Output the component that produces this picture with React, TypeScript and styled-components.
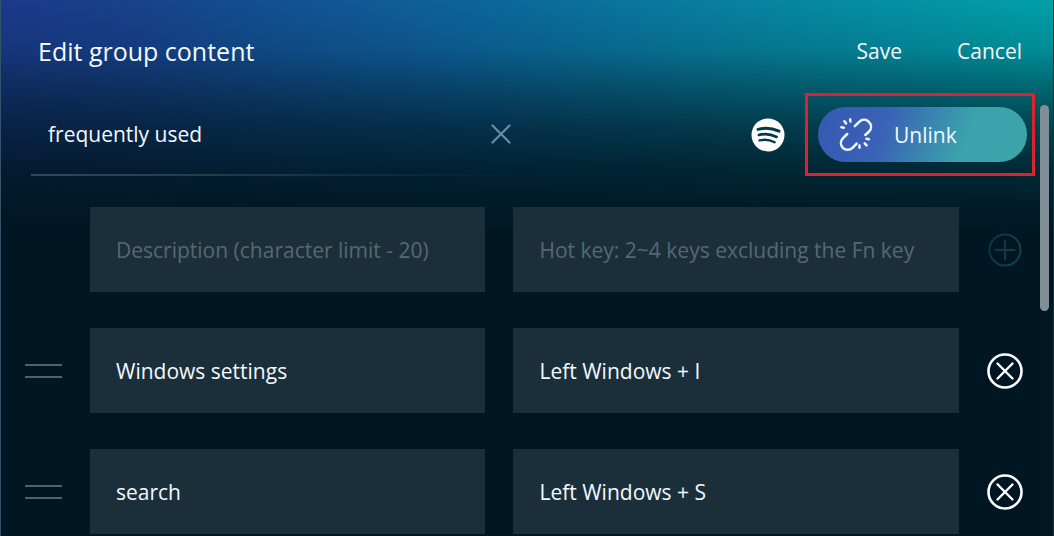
import React from "react";
import styled, { createGlobalStyle, css } from "styled-components";

const GlobalStyle = createGlobalStyle`
  *, *::before, *::after { box-sizing: border-box; }
  body {
    margin: 0;
    background: #001622;
    color: #f2f9ff;
    font-family: "Open Sans", "Noto Sans", sans-serif;
    font-size: 21px;
    line-height: 28px;
  }
`;

const Panel = styled.main`
  min-height: 100vh;
  border-left: 1px solid #34536a;
  border-right: 1px solid #0c3440;
  background:
    linear-gradient(
      to bottom,
      rgba(0, 22, 34, 0) 0,
      rgba(0, 22, 34, 0.14) 50px,
      rgba(0, 22, 34, 0.43) 90px,
      rgba(0, 22, 34, 0.66) 125px,
      rgba(0, 22, 34, 0.86) 170px,
      rgba(0, 22, 34, 0.95) 205px,
      #001622 240px
    ),
    linear-gradient(to right, #1a3a8a 0, #17418c 12%, #0c659c 45%, #08809f 68%, #00a0a8 100%);
`;

const Header = styled.header`
  display: flex;
  align-items: center;
  justify-content: space-between;
  height: 93px;
  padding: 9px 31px 0 37px;
`;

const Title = styled.h1`
  margin: 0;
  font-size: 25px;
  font-weight: 400;
  line-height: 32px;
`;

const Actions = styled.div`
  display: flex;
  gap: 55px;
`;

const plainButton = css`
  margin: 0;
  padding: 0;
  border: 0;
  background: none;
  color: inherit;
  font: inherit;
  cursor: pointer;
`;

const TextButton = styled.button`
  ${plainButton}
`;

const Body = styled.div`
  display: flex;
  padding-right: 4px;
`;

const Content = styled.form`
  flex: 1;
  min-width: 0;
`;

const GroupBar = styled.div`
  display: flex;
  align-items: center;
  padding: 0 5px 0 30px;
`;

const NameField = styled.div`
  display: flex;
  align-items: center;
  flex: 0 1 480px;
  height: 83px;
  padding-left: 17px;
  border-bottom: 2px solid;
  border-image: linear-gradient(to right, #2f4859, #25404f 30%, rgba(37, 64, 79, 0)) 1;
`;

const NameInput = styled.input`
  flex: 1;
  min-width: 0;
  padding: 0;
  border: 0;
  outline: 0;
  background: none;
  color: inherit;
  font: inherit;
`;

const IconButton = styled.button<{ $tone?: string }>`
  ${plainButton}
  display: grid;
  place-items: center;
  color: ${(p) => p.$tone ?? "#ffffff"};

  svg { display: block; }
`;

const LinkTools = styled.div`
  display: flex;
  align-items: center;
  gap: 20px;
  margin-left: auto;
`;

const Highlight = styled.div`
  padding: 11px 5px 11px 10px;
  border: 3px solid #dc222c;
`;

const UnlinkButton = styled.button`
  ${plainButton}
  display: flex;
  align-items: center;
  gap: 20px;
  width: 209px;
  height: 55px;
  padding: 0 20px;
  border-radius: 28px;
  background: linear-gradient(110deg, #3659b2 0, #3a62b6 32%, #3ba3ab 70%, #3ba5ab 100%);
`;

const Rows = styled.ul`
  display: grid;
  gap: 36px;
  margin: 0;
  padding: 31px 17px 2px 24px;
  list-style: none;
`;

const Row = styled.li`
  display: grid;
  grid-template-columns: 37px minmax(0, 395fr) minmax(0, 445fr) 36px;
  column-gap: 28px;
  align-items: center;
`;

const Field = styled.input<{ $column: number }>`
  grid-column: ${(p) => p.$column};
  width: 100%;
  height: 85px;
  padding: 0 26px;
  border: 0;
  border-radius: 0;
  outline: 0;
  background: #1b2f3b;
  color: inherit;
  font: inherit;

  &::placeholder {
    color: #566872;
    opacity: 1;
  }
`;

const ScrollThumb = styled.div`
  width: 9px;
  height: 206px;
  margin-top: 12px;
  border-radius: 5px;
  background: #808e98;
`;

const CloseIcon = () => (
  <svg width="20" height="20" viewBox="0 0 20 20" fill="none" stroke="currentColor" strokeWidth="2.2" strokeLinecap="round">
    <path d="M1.500 1.500 18.500 18.500M18.500 1.500 1.500 18.500" />
  </svg>
);

const SpotifyIcon = () => (
  <svg width="34" height="34" viewBox="0 0 34 34" role="img" aria-label="Spotify">
    <circle cx="17" cy="17" r="16.5" fill="#ffffff" />
    <g fill="none" stroke="#033a47" strokeLinecap="round">
      <path d="M7 11.400c7-1.800 14.200-1.200 21 1.800" strokeWidth="3" />
      <path d="M7.800 17c6-1.600 12-1 17.800 2" strokeWidth="2.600" />
      <path d="M8.600 22.400c5.400-1.200 10.200-.6 15 1.900" strokeWidth="2.400" />
    </g>
  </svg>
);

const UnlinkIcon = () => (
  <svg width="36" height="36" viewBox="0 0 36 36" fill="none" stroke="#eef6ff" strokeWidth="2.500" strokeLinecap="round">
    <path d="M16.800 9.200l4.400-4.300c3-2.800 7-2.700 9.700-.1 2.700 2.700 2.900 6.800.2 9.700L27.300 18" />
    <path d="M9.200 17L5 21.200c-2.800 2.900-2.700 7-.1 9.700 2.700 2.600 6.800 2.600 9.600-.1L18.700 26.600" />
    <path d="M6.400 4.200l1.700 2.300M12.200 2.200l.2 2.300M3.400 10.200l2.400.5M21.400 28.400l.2 2.300M26.700 26.300l1.900 2.100M28.400 21.700l2.500.6" />
  </svg>
);

const AddIcon = () => (
  <svg width="34" height="34" viewBox="0 0 34 34" fill="none" strokeWidth="2" strokeLinecap="round">
    <defs>
      <linearGradient id="addTone" gradientUnits="userSpaceOnUse" x1="0" y1="0" x2="34" y2="10">
        <stop offset="0" stopColor="#0f2f49" />
        <stop offset="1" stopColor="#0b464e" />
      </linearGradient>
    </defs>
    <g stroke="url(#addTone)">
      <circle cx="17" cy="17" r="15.500" />
      <path d="M7.500 17h19M17 7.500v19" />
    </g>
  </svg>
);

const RemoveIcon = () => (
  <svg width="36" height="36" viewBox="0 0 36 36" fill="none" stroke="currentColor" strokeLinecap="round">
    <circle cx="18" cy="18" r="16.500" strokeWidth="2.600" />
    <path d="M10.500 10.500l15 15M25.500 10.500l-15 15" strokeWidth="2.400" />
  </svg>
);

const GripIcon = () => (
  <svg width="37" height="16" viewBox="0 0 37 16" stroke="currentColor" strokeWidth="2">
    <path d="M0 2h37M0 14h37" />
  </svg>
);

const hotkeys = [
  { description: "Windows settings", keys: "Left Windows + I" },
  { description: "search", keys: "Left Windows + S" },
];

export default function App() {
  return (
    <>
      <GlobalStyle />
      <Panel>
        <Header>
          <Title>Edit group content</Title>
          <Actions>
            <TextButton type="button">Save</TextButton>
            <TextButton type="button">Cancel</TextButton>
          </Actions>
        </Header>
        <Body>
          <Content onSubmit={(e) => e.preventDefault()}>
            <GroupBar>
              <NameField>
                <NameInput aria-label="Group name" defaultValue="frequently used" />
                <IconButton type="button" aria-label="Clear name" $tone="#6b8ea3">
                  <CloseIcon />
                </IconButton>
              </NameField>
              <LinkTools>
                <SpotifyIcon />
                <Highlight>
                  <UnlinkButton type="button">
                    <UnlinkIcon />
                    Unlink
                  </UnlinkButton>
                </Highlight>
              </LinkTools>
            </GroupBar>
            <Rows>
              <Row>
                <Field $column={2} aria-label="New description" placeholder="Description (character limit - 20)" />
                <Field $column={3} aria-label="New hot key" placeholder="Hot key: 2~4 keys excluding the Fn key" />
                <IconButton type="button" aria-label="Add hot key">
                  <AddIcon />
                </IconButton>
              </Row>
              {hotkeys.map((item) => (
                <Row key={item.description}>
                  <IconButton type="button" aria-label={`Reorder ${item.description}`} $tone="#4e626f">
                    <GripIcon />
                  </IconButton>
                  <Field $column={2} aria-label="Description" defaultValue={item.description} />
                  <Field $column={3} aria-label="Hot key" defaultValue={item.keys} />
                  <IconButton type="button" aria-label={`Remove ${item.description}`}>
                    <RemoveIcon />
                  </IconButton>
                </Row>
              ))}
            </Rows>
          </Content>
          <ScrollThumb />
        </Body>
      </Panel>
    </>
  );
}
